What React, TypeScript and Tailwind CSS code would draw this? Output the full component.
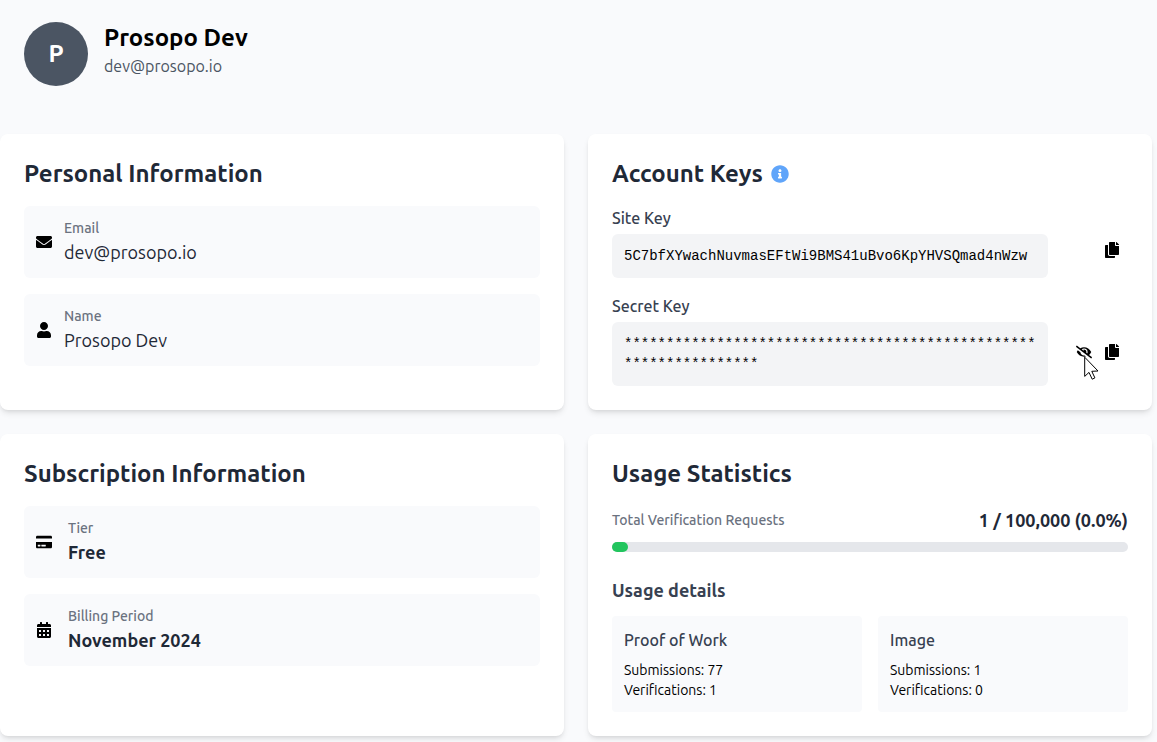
import React, { useState } from 'react';
import {
  FaCalendarAlt,
  FaCopy,
  FaCreditCard,
  FaEnvelope,
  FaEyeSlash,
  FaInfoCircle,
  FaUser,
} from 'react-icons/fa';

const SITE_KEY = '5C7bfXYwachNuvmasEFtWi9BMS41uBvo6KpYHVSQmad4nWzw';
const SECRET_KEY = '*'.repeat(65);

const Card: React.FC<{ title: string; extra?: React.ReactNode; children: React.ReactNode }> = ({
  title,
  extra,
  children,
}) => (
  <section className="bg-white rounded-lg shadow-md p-6">
    <div className="flex items-center gap-2 mb-4">
      <h2 className="text-2xl font-bold text-[#1f2937]">{title}</h2>
      {extra}
    </div>
    {children}
  </section>
);

const UsageBox: React.FC<{ title: string; submissions: number; verifications: number }> = ({
  title,
  submissions,
  verifications,
}) => (
  <div className="bg-[#f9fafc] rounded p-3">
    <h4 className="font-medium text-[#374151] mb-2">{title}</h4>
    <p className="text-sm">Submissions: {submissions}</p>
    <p className="text-sm">Verifications: {verifications}</p>
  </div>
);

const Pointer = () => (
  <svg
    className="absolute left-2 top-3 pointer-events-none"
    width="16"
    height="25"
    viewBox="0 0 16 25"
    fill="white"
    stroke="black"
    strokeWidth="1"
  >
    <path d="M.7 1.2v19.2l4.3-4 3.2 6.8 2.7-1.3-3.1-6.6 6.2-.3z" />
  </svg>
);

const App: React.FC = () => {
  const [used] = useState(1);
  const limit = 100000;

  return (
    <div className="min-h-screen bg-[#f9fafc] pr-[5px] pb-1 text-black font-['Ubuntu','Open_Sans',sans-serif]">
      {/* Header */}
      <header className="flex items-start gap-4 px-6 pt-[22px] pb-12">
        <div className="w-16 h-16 rounded-full bg-[#4b5563] text-white text-2xl font-bold flex items-center justify-center">
          P
        </div>
        <div>
          <h1 className="text-2xl font-bold">Prosopo Dev</h1>
          <p className="text-[#4b5563]">dev@prosopo.io</p>
        </div>
      </header>

      <main className="grid grid-cols-2 gap-6">
        <Card title="Personal Information">
          <div className="space-y-4">
            <div className="flex items-center gap-3 p-3 bg-[#f9fafc] rounded-md">
              <FaEnvelope size={16} />
              <div>
                <p className="text-sm font-medium text-[#6b7280]">Email</p>
                <p className="text-lg text-[#1f2937]">dev@prosopo.io</p>
              </div>
            </div>
            <div className="flex items-center gap-3 p-3 bg-[#f9fafc] rounded-md">
              <FaUser size={16} />
              <div>
                <p className="text-sm font-medium text-[#6b7280]">Name</p>
                <p className="text-lg text-[#1f2937]">Prosopo Dev</p>
              </div>
            </div>
          </div>
        </Card>

        <Card
          title="Account Keys"
          extra={
            <button type="button" aria-label="About account keys" className="text-[#60a5fa]">
              <FaInfoCircle size={18} />
            </button>
          }
        >
          <div className="space-y-4">
            <div>
              <h3 className="font-medium text-[#374151] mb-1">Site Key</h3>
              <div className="flex items-start">
                <code className="flex-1 min-w-0 bg-gray-100 rounded-md p-3 text-sm break-all font-['Liberation_Mono',monospace]">
                  {SITE_KEY}
                </code>
                <div className="w-20 flex justify-end pr-2 pt-2">
                  <button type="button" aria-label="Copy site key">
                    <FaCopy size={16} />
                  </button>
                </div>
              </div>
            </div>
            <div>
              <h3 className="font-medium text-[#374151] mb-1">Secret Key</h3>
              <div className="flex items-center">
                <code className="flex-1 min-w-0 bg-gray-100 rounded-md p-3 text-sm break-all font-['Liberation_Mono',monospace]">
                  {SECRET_KEY}
                </code>
                <div className="w-20 flex justify-end gap-3 pr-2 pb-1">
                  <button type="button" aria-label="Show secret key" className="relative">
                    <FaEyeSlash size={16} />
                    <Pointer />
                  </button>
                  <button type="button" aria-label="Copy secret key">
                    <FaCopy size={16} />
                  </button>
                </div>
              </div>
            </div>
          </div>
        </Card>

        <Card title="Subscription Information">
          <div className="space-y-4">
            <div className="flex items-center gap-4 p-3 bg-[#f9fafc] rounded-md">
              <FaCreditCard size={16} />
              <div>
                <p className="text-sm font-medium text-[#6b7280]">Tier</p>
                <p className="text-lg font-bold text-[#1f2937]">Free</p>
              </div>
            </div>
            <div className="flex items-center gap-4 p-3 bg-[#f9fafc] rounded-md">
              <FaCalendarAlt size={16} />
              <div>
                <p className="text-sm font-medium text-[#6b7280]">Billing Period</p>
                <p className="text-lg font-bold text-[#1f2937]">November 2024</p>
              </div>
            </div>
          </div>
        </Card>

        <Card title="Usage Statistics">
          <div className="flex items-center justify-between mb-2">
            <span className="text-sm font-medium text-[#6b7280]">Total Verification Requests</span>
            <span className="text-lg font-bold text-[#1f2937]">
              {used} / {limit.toLocaleString('en-US')} ({((used / limit) * 100).toFixed(1)}%)
            </span>
          </div>
          <div
            role="progressbar"
            aria-label="Total Verification Requests"
            aria-valuenow={used}
            aria-valuemax={limit}
            className="h-2.5 rounded-full bg-gray-200"
          >
            <div className="h-2.5 min-w-4 rounded-full bg-[#22c55e]" style={{ width: `${(used / limit) * 100}%` }} />
          </div>

          <h3 className="text-lg font-bold text-[#374151] mt-6 mb-3">Usage details</h3>
          <div className="grid grid-cols-2 gap-4">
            <UsageBox title="Proof of Work" submissions={77} verifications={1} />
            <UsageBox title="Image" submissions={1} verifications={0} />
          </div>
        </Card>
      </main>
    </div>
  );
};

export default App;
